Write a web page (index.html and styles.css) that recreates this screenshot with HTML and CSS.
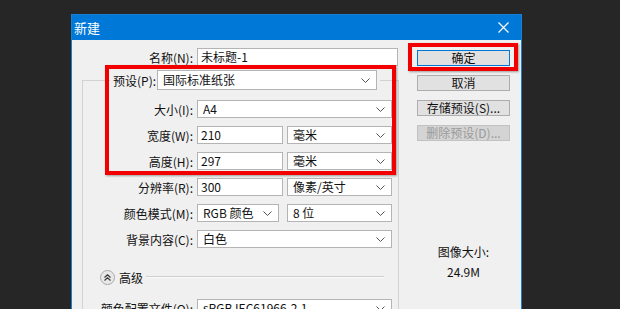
FILE: index.html
```html
<!DOCTYPE html>
<html lang="zh-CN">
<head>
    <meta charset="UTF-8">
    <title>新建</title>
    <link rel="stylesheet" href="styles.css">
</head>
<body>
    <div class="dialog">
        <div class="titlebar">
            <span class="title">新建</span>
            <svg class="close" width="11" height="11" viewBox="0 0 11 11"><path d="M0.5 0.5 L10.5 10.5 M10.5 0.5 L0.5 10.5" stroke="#fff" stroke-width="1.2"/></svg>
        </div>
        <div class="content">
            <div class="form">
                <div class="row name-row">
                    <span class="lbl">名称(N):</span>
                    <div class="input name-input">未标题-1</div>
                </div>
                <fieldset class="group">
                    <legend class="preset">
                        <span class="preset-lbl">预设(P):</span>
                        <div class="select preset-select"><span>国际标准纸张</span><svg class="chev" width="9" height="5" viewBox="0 0 9 5"><path d="M0.5 0.5 L4.5 4.5 L8.5 0.5" fill="none" stroke="#555"/></svg></div>
                    </legend>
                    <div class="rows">
                        <div class="row">
                            <span class="lbl">大小(I):</span>
                            <div class="select wide"><span>A4</span><svg class="chev" width="9" height="5" viewBox="0 0 9 5"><path d="M0.5 0.5 L4.5 4.5 L8.5 0.5" fill="none" stroke="#555"/></svg></div>
                        </div>
                        <div class="row">
                            <span class="lbl">宽度(W):</span>
                            <div class="input short">210</div>
                            <div class="select unit"><span>毫米</span><svg class="chev" width="9" height="5" viewBox="0 0 9 5"><path d="M0.5 0.5 L4.5 4.5 L8.5 0.5" fill="none" stroke="#555"/></svg></div>
                        </div>
                        <div class="row">
                            <span class="lbl">高度(H):</span>
                            <div class="input short">297</div>
                            <div class="select unit"><span>毫米</span><svg class="chev" width="9" height="5" viewBox="0 0 9 5"><path d="M0.5 0.5 L4.5 4.5 L8.5 0.5" fill="none" stroke="#555"/></svg></div>
                        </div>
                        <div class="row">
                            <span class="lbl">分辨率(R):</span>
                            <div class="input short">300</div>
                            <div class="select unit"><span>像素/英寸</span><svg class="chev" width="9" height="5" viewBox="0 0 9 5"><path d="M0.5 0.5 L4.5 4.5 L8.5 0.5" fill="none" stroke="#555"/></svg></div>
                        </div>
                        <div class="row tall">
                            <span class="lbl">颜色模式(M):</span>
                            <div class="select mode"><span>RGB 颜色</span><svg class="chev" width="9" height="5" viewBox="0 0 9 5"><path d="M0.5 0.5 L4.5 4.5 L8.5 0.5" fill="none" stroke="#555"/></svg></div>
                            <div class="select unit"><span>8 位</span><svg class="chev" width="9" height="5" viewBox="0 0 9 5"><path d="M0.5 0.5 L4.5 4.5 L8.5 0.5" fill="none" stroke="#555"/></svg></div>
                        </div>
                        <div class="row">
                            <span class="lbl">背景内容(C):</span>
                            <div class="select wide"><span>白色</span><svg class="chev" width="9" height="5" viewBox="0 0 9 5"><path d="M0.5 0.5 L4.5 4.5 L8.5 0.5" fill="none" stroke="#555"/></svg></div>
                        </div>
                        <div class="advanced">
                            <span class="toggle"><svg width="7" height="7" viewBox="0 0 7 7"><path d="M0.5 3.5 L3.5 0.8 L6.5 3.5 M0.5 6.5 L3.5 3.8 L6.5 6.5" fill="none" stroke="#333" stroke-width="1.1"/></svg></span>
                            <span class="adv-text">高级</span>
                            <span class="adv-line"></span>
                        </div>
                        <div class="row profile-row">
                            <span class="lbl">颜色配置文件(O):</span>
                            <div class="select wide"><span>sRGB IEC61966-2.1</span><svg class="chev" width="9" height="5" viewBox="0 0 9 5"><path d="M0.5 0.5 L4.5 4.5 L8.5 0.5" fill="none" stroke="#555"/></svg></div>
                        </div>
                    </div>
                </fieldset>
            </div>
            <div class="side">
                <div class="btn btn-default">确定</div>
                <div class="btn">取消</div>
                <div class="btn">存储预设(S)...</div>
                <div class="btn btn-disabled">删除预设(D)...</div>
                <div class="info">
                    <div>图像大小:</div>
                    <div>24.9M</div>
                </div>
            </div>
        </div>
    </div>

    <div class="mark mark-fields"></div>
    <div class="mark mark-ok"></div>
</body>
</html>
```

FILE: styles.css
```css
body {
    margin: 0;
    background-color: #262626;
    font-family: "Noto Sans CJK SC", "Noto Sans", sans-serif;
    font-size: 12px;
    color: #111;
    overflow: hidden;
    height: 309px;
    position: relative;
}
.dialog {
    width: 451px;
    height: 300px;
    margin: 14px 0 0 71px;
    box-sizing: border-box;
    border: 1px solid #1a80d6;
    border-bottom: none;
    background-color: #f0f0f0;
    overflow: hidden;
}
.titlebar {
    height: 25px;
    background-color: #0078d7;
    color: #fff;
    display: flex;
    align-items: center;
    justify-content: space-between;
    padding: 0 12px 0 2px;
}
.title {
    font-size: 13px;
}
.content {
    display: flex;
}
.form {
    width: 327px;
}
.row {
    display: flex;
    align-items: center;
    height: 18px;
}
.lbl {
    width: 110px;
    margin-right: 4px;
    text-align: right;
    white-space: nowrap;
}
.name-row {
    margin-top: 8px;
}
.name-row .lbl {
    width: 121px;
}
.input,
.select {
    height: 18px;
    box-sizing: border-box;
    border: 1px solid #b4b4b4;
    background-color: #fff;
    line-height: 16px;
    white-space: nowrap;
}
.input {
    padding-left: 3px;
}
.select {
    display: flex;
    align-items: center;
    justify-content: space-between;
    padding: 0 6px 0 5px;
}
.name-input {
    width: 201px;
}
.wide {
    width: 195px;
}
.short {
    width: 86px;
    margin-right: 4px;
}
.unit {
    width: 105px;
}
.mode {
    width: 82px;
    margin-right: 8px;
}
.group {
    width: 317px;
    box-sizing: border-box;
    margin: 4px 0 0 10px;
    padding: 10px 6px 20px 0;
    border: 1px solid #d2d2d2;
}
.preset {
    display: flex;
    align-items: center;
    margin-left: 27px;
    padding: 0 3px;
}
.preset-lbl {
    width: 40px;
    margin-right: 4px;
    text-align: right;
    white-space: nowrap;
}
.preset-select {
    width: 220px;
    height: 20px;
}
.rows {
    display: flex;
    flex-direction: column;
    gap: 8px;
}
.advanced {
    display: flex;
    align-items: center;
    height: 14px;
    margin-top: 14px;
    padding-left: 17px;
}
.toggle {
    width: 13px;
    height: 13px;
    border: 1px solid #a9a9a9;
    border-radius: 50%;
    background-color: #e8e8e8;
    display: flex;
    align-items: center;
    justify-content: center;
}
.adv-text {
    margin-left: 4px;
}
.adv-line {
    flex: 1;
    margin: 0 8px 0 3px;
    border-top: 1px solid #cfcfcf;
    border-bottom: 1px solid #fafafa;
}
.profile-row {
    margin-top: 7px;
}
.side {
    width: 93px;
    margin-left: 18px;
    padding-top: 10px;
    display: flex;
    flex-direction: column;
    gap: 9px;
}
.btn {
    height: 16px;
    box-sizing: border-box;
    border: 1px solid #adadad;
    background-color: #e1e1e1;
    text-align: center;
    line-height: 14px;
    white-space: nowrap;
}
.btn-default {
    border-color: #0078d7;
}
.btn-disabled {
    background-color: #d4d4d4;
    border-color: #c2c2c2;
    color: #9a9a9a;
}
.info {
    margin-top: 92px;
    text-align: center;
    line-height: 20px;
}
.mark {
    position: absolute;
    box-sizing: border-box;
    border: 4px solid #f20000;
    box-shadow: 1px 1px 2px rgba(0, 0, 0, 0.35);
}
.mark-fields {
    left: 105px;
    top: 65px;
    width: 291px;
    height: 110px;
}
.mark-ok {
    left: 408px;
    top: 43px;
    width: 110px;
    height: 28px;
}
```
